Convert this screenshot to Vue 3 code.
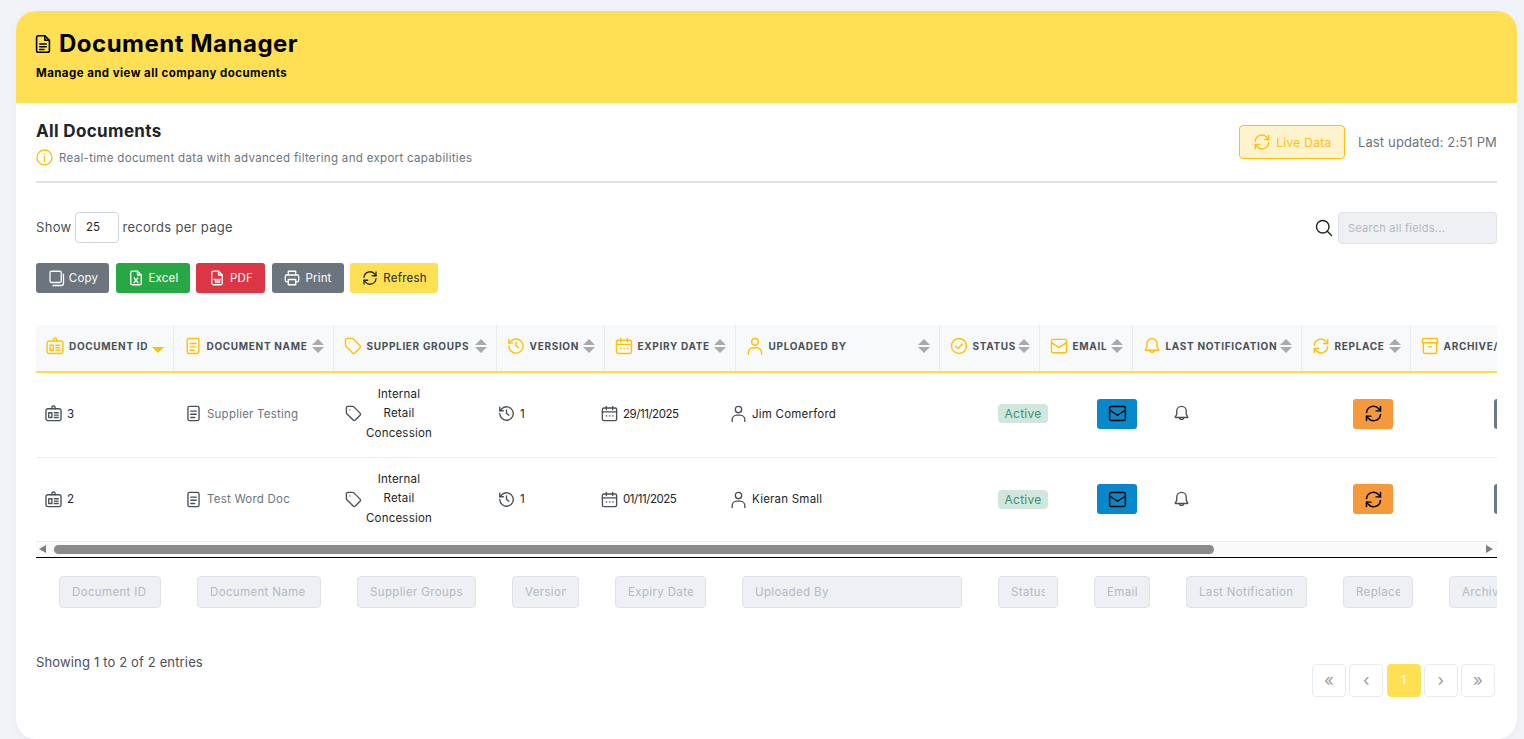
<script setup>
import { h } from "vue";

const icons = {
  doc: ["M7 3h7l5 5v11a2 2 0 0 1-2 2H7a2 2 0 0 1-2-2V5a2 2 0 0 1 2-2z", "M14 3v5h5", "M8.5 12h7", "M8.5 15h7", "M8.5 18h4.5"],
  badge: ["M5 6h14a2.5 2.5 0 0 1 2.5 2.5v10A2.5 2.5 0 0 1 19 21H5a2.5 2.5 0 0 1-2.5-2.5v-10A2.5 2.5 0 0 1 5 6z", "M10 6V4.5a2 2 0 0 1 4 0V6", "M6 11h4v6H6z", "M13 11h5", "M13 14h5", "M13 17h5"],
  tag: ["M5 3h6a2 2 0 0 1 1.4.6l7.9 7.9a2 2 0 0 1 0 2.8l-6 6a2 2 0 0 1-2.8 0l-7.9-7.9a2 2 0 0 1-.6-1.4V5a2 2 0 0 1 2-2z", "M7.5 7.5h.01"],
  history: ["M3.5 12a8.5 8.5 0 1 0 2.6-6.1L3.5 8.5", "M3.5 4v4.5H8", "M12 7.5V12l3 2"],
  calendar: ["M5 5h14a2 2 0 0 1 2 2v12a2 2 0 0 1-2 2H5a2 2 0 0 1-2-2V7a2 2 0 0 1 2-2z", "M3 10h18", "M8 3v4", "M16 3v4", "M8 15h.5", "M12 15h.5", "M16 15h.5"],
  user: ["M12 3a4 4 0 1 0 0 8 4 4 0 0 0 0-8z", "M4 22v-2a6 6 0 0 1 6-6h4a6 6 0 0 1 6 6v2"],
  check: ["M12 3a9 9 0 1 0 0 18 9 9 0 0 0 0-18z", "M8 12.5l3 2.5 5-5.5"],
  mail: ["M5 4h14a2 2 0 0 1 2 2v12a2 2 0 0 1-2 2H5a2 2 0 0 1-2-2V6a2 2 0 0 1 2-2z", "M3 8l9 6 9-6"],
  bell: ["M12 3a6 6 0 0 0-6 6v4l-2 3.5a.5.5 0 0 0 .5.5h15a.5.5 0 0 0 .5-.5L18 13V9a6 6 0 0 0-6-6z", "M9.5 17a2.5 2.5 0 0 0 5 0"],
  refresh: ["M4 11a8 8 0 0 1 14-4.5L20 9", "M20 4v5h-5", "M20 13a8 8 0 0 1-14 4.5L4 15", "M4 20v-5h5"],
  archive: ["M4.5 3h15A1.5 1.5 0 0 1 21 4.5V8H3V4.5A1.5 1.5 0 0 1 4.5 3z", "M4 8v11a2 2 0 0 0 2 2h12a2 2 0 0 0 2-2V8", "M10 13h4"],
  copy: ["M6 3h11a2 2 0 0 1 2 2v11a2 2 0 0 1-2 2H6a2 2 0 0 1-2-2V5a2 2 0 0 1 2-2z", "M22 7v12a3 3 0 0 1-3 3H8"],
  excel: ["M7 3h7l5 5v11a2 2 0 0 1-2 2H7a2 2 0 0 1-2-2V5a2 2 0 0 1 2-2z", "M14 3v5h5", "M9.5 12l5 6", "M14.5 12l-5 6"],
  pdf: ["M7 3h7l5 5v11a2 2 0 0 1-2 2H7a2 2 0 0 1-2-2V5a2 2 0 0 1 2-2z", "M14 3v5h5", "M8 14h2v4", "M12 14v4h1a2 2 0 0 0 0-4h-1z", "M17 14h-1.5v4"],
  print: ["M7 8V3h10v5", "M7 17H5a2 2 0 0 1-2-2v-5a2 2 0 0 1 2-2h14a2 2 0 0 1 2 2v5a2 2 0 0 1-2 2h-2", "M7 14h10v7H7z"],
  search: ["M10.5 3a7.5 7.5 0 1 0 0 15 7.5 7.5 0 0 0 0-15z", "M16 16l5 5"],
  info: ["M12 2.5a9.5 9.5 0 1 0 0 19 9.5 9.5 0 0 0 0-19z", "M12 11v6", "M12 7.5h.01"],
  file: ["M7 3h10a2 2 0 0 1 2 2v14a2 2 0 0 1-2 2H7a2 2 0 0 1-2-2V5a2 2 0 0 1 2-2z", "M8.5 9h7", "M8.5 13h7", "M8.5 17h5"]
};

const Icon = ({ name }) =>
  h("svg", { viewBox: "0 0 24 24", fill: "none", stroke: "currentColor", "stroke-width": 1.7, "stroke-linecap": "round", "stroke-linejoin": "round" },
    icons[name].map((d) => h("path", { d })));

const headers = [
  { label: "Document ID", icon: "badge", width: 137, active: true },
  { label: "Document Name", icon: "file", width: 160 },
  { label: "Supplier Groups", icon: "tag", width: 163 },
  { label: "Version", icon: "history", width: 108 },
  { label: "Expiry Date", icon: "calendar", width: 131 },
  { label: "Uploaded By", icon: "user", width: 204 },
  { label: "Status", icon: "check", width: 100 },
  { label: "Email", icon: "mail", width: 93 },
  { label: "Last Notification", icon: "bell", width: 169 },
  { label: "Replace", icon: "refresh", width: 109 },
  { label: "Archive/Restore", icon: "archive", width: 170 }
];

const bodyWidths = [137, 160, 153, 103, 129, 268, 99, 76, 180, 141, 150];

const rows = [
  { id: 3, name: "Supplier Testing", version: 1, expiry: "29/11/2025", by: "Jim Comerford" },
  { id: 2, name: "Test Word Doc", version: 1, expiry: "01/11/2025", by: "Kieran Small" }
];

const groups = ["Internal", "Retail", "Concession"];

const filters = [
  { label: "Document ID", width: 102 },
  { label: "Document Name", width: 124 },
  { label: "Supplier Groups", width: 119 },
  { label: "Version", width: 67 },
  { label: "Expiry Date", width: 91 },
  { label: "Uploaded By", width: 220 },
  { label: "Status", width: 60 },
  { label: "Email", width: 56 },
  { label: "Last Notification", width: 121 },
  { label: "Replace", width: 70 },
  { label: "Archive/Restore", width: 120 }
];

const tools = [
  { label: "Copy", icon: "copy", cls: "grey", width: 73 },
  { label: "Excel", icon: "excel", cls: "green", width: 74 },
  { label: "PDF", icon: "pdf", cls: "red", width: 69 },
  { label: "Print", icon: "print", cls: "grey", width: 72 },
  { label: "Refresh", icon: "refresh", cls: "yellow", width: 88 }
];
</script>

<template>
  <div class="page">
    <div class="card">
      <header class="banner">
        <h1><Icon name="doc" class="title-icon" />Document Manager</h1>
        <p>Manage and view all company documents</p>
      </header>

      <div class="content">
        <div class="top">
          <div>
            <h2>All Documents</h2>
            <div class="sub"><Icon name="info" class="info-icon" />Real-time document data with advanced filtering and export capabilities</div>
          </div>
          <div class="live">
            <button class="live-btn"><Icon name="refresh" class="live-icon" />Live Data</button>
            <span class="updated">Last updated: 2:51 PM</span>
          </div>
        </div>

        <div class="controls">
          <div class="length">
            Show <input class="length-input" value="25" /> records per page
          </div>
          <div class="search">
            <Icon name="search" class="search-icon" />
            <input class="field search-input" placeholder="Search all fields..." />
          </div>
        </div>

        <div class="tools">
          <button v-for="t in tools" :key="t.label" class="tool" :class="t.cls" :style="{ width: t.width + 'px' }">
            <Icon :name="t.icon" class="tool-icon" />{{ t.label }}
          </button>
        </div>

        <div class="table-wrap">
          <table class="head-table">
            <colgroup>
              <col v-for="c in headers" :key="c.label" :style="{ width: c.width + 'px' }" />
            </colgroup>
            <thead>
              <tr>
                <th v-for="c in headers" :key="c.label">
                  <div class="th-in">
                    <Icon :name="c.icon" class="th-icon" />
                    <span>{{ c.label }}</span>
                    <i class="sort" :class="{ active: c.active }"></i>
                  </div>
                </th>
              </tr>
            </thead>
          </table>

          <table class="body-table">
            <colgroup>
              <col v-for="(w, i) in bodyWidths" :key="i" :style="{ width: w + 'px' }" />
            </colgroup>
            <tbody>
              <tr v-for="r in rows" :key="r.id">
                <td class="first"><div class="cell"><Icon name="badge" class="cell-icon" />{{ r.id }}</div></td>
                <td><div class="cell muted"><Icon name="file" class="cell-icon" />{{ r.name }}</div></td>
                <td>
                  <div class="cell">
                    <Icon name="tag" class="cell-icon" />
                    <div class="groups"><div v-for="g in groups" :key="g">{{ g }}</div></div>
                  </div>
                </td>
                <td><div class="cell"><Icon name="history" class="cell-icon" />{{ r.version }}</div></td>
                <td><div class="cell"><Icon name="calendar" class="cell-icon" /><span class="date">{{ r.expiry }}</span></div></td>
                <td><div class="cell"><Icon name="user" class="cell-icon" />{{ r.by }}</div></td>
                <td><span class="badge">Active</span></td>
                <td><button class="act blue"><Icon name="mail" class="act-icon" /></button></td>
                <td><Icon name="bell" class="cell-icon" /></td>
                <td><button class="act orange"><Icon name="refresh" class="act-icon" /></button></td>
                <td><button class="act slate"><Icon name="archive" class="act-icon" /></button></td>
              </tr>
            </tbody>
          </table>

          <div class="scrollbar">
            <i class="arrow left"></i>
            <div class="thumb"></div>
            <i class="arrow right"></i>
          </div>
        </div>

        <div class="filters">
          <input v-for="f in filters" :key="f.label" class="field" :style="{ width: f.width + 'px' }" :placeholder="f.label" />
        </div>

        <div class="foot">
          <span class="showing">Showing 1 to 2 of 2 entries</span>
          <nav class="pager">
            <a>«</a>
            <a>‹</a>
            <a class="on">1</a>
            <a>›</a>
            <a>»</a>
          </nav>
        </div>
      </div>
    </div>
  </div>
</template>

<style>
html, body {
  margin: 0;
  background: #f1f3f9;
  overflow: hidden;
}
</style>

<style scoped>
* {
  box-sizing: border-box;
}

.page {
  height: 739px;
  padding: 11px 7px 0 16px;
  font-family: Inter, "Noto Sans", sans-serif;
  color: #212529;
}

.card {
  height: 728px;
  background: #fff;
  border-radius: 20px;
  overflow: hidden;
  box-shadow: 0 2px 8px rgba(0, 0, 0, 0.04);
}

.banner {
  height: 92px;
  background: #ffe055;
  padding: 18px 20px 0;
  color: #000;
}

.banner h1 {
  margin: 0;
  display: flex;
  align-items: center;
  font-size: 24px;
  line-height: 30px;
  font-weight: 700;
  letter-spacing: 0.5px;
}

.title-icon {
  width: 22px;
  height: 22px;
  margin: 0 5px 0 -4px;
}

.banner p {
  margin: 7px 0 0;
  font-size: 11.5px;
  line-height: 14px;
  font-weight: 700;
  letter-spacing: 0.44px;
}

.content {
  padding: 0 20px;
}

.top {
  height: 80px;
  border-bottom: 2px solid #dee2e6;
  display: flex;
  justify-content: space-between;
  padding-top: 18px;
}

h2 {
  margin: 0;
  font-size: 17px;
  line-height: 21px;
  font-weight: 700;
  letter-spacing: 0.35px;
  color: #212529;
}

.sub {
  display: flex;
  align-items: center;
  margin-top: 6px;
  font-size: 11.5px;
  line-height: 18px;
  color: #6c757d;
  letter-spacing: 0.32px;
}

.info-icon {
  width: 19px;
  height: 19px;
  margin: 0 5px 0 -1px;
  color: #ffc107;
}

.live {
  display: flex;
  align-items: flex-start;
  margin-top: 4px;
}

.live-btn {
  width: 106px;
  height: 34px;
  display: flex;
  align-items: center;
  justify-content: center;
  background: #fff3cd;
  border: 1px solid #ffc107;
  border-radius: 4px;
  color: #ffc107;
  font: inherit;
  font-size: 12px;
  letter-spacing: 0.3px;
}

.live-icon {
  width: 20px;
  height: 20px;
  margin-right: 4px;
}

.updated {
  margin-left: 13px;
  font-size: 13px;
  line-height: 34px;
  color: #6c757d;
  letter-spacing: 0.15px;
}

.controls {
  display: flex;
  justify-content: space-between;
  align-items: center;
  margin-top: 29px;
  height: 32px;
}

.length {
  display: flex;
  align-items: center;
  gap: 3.5px;
  margin-top: -2px;
  font-size: 13px;
  color: #495057;
  letter-spacing: 0.3px;
}

.length-input {
  width: 44px;
  height: 31px;
  border: 1px solid #ced4da;
  border-radius: 4px;
  padding: 0 10px;
  font: inherit;
  font-size: 11.5px;
  color: #212529;
  outline: none;
}

.search {
  display: flex;
  align-items: center;
}

.search-icon {
  width: 20px;
  height: 20px;
  margin-right: 4px;
  color: #212529;
}

.field {
  height: 32px;
  flex: none;
  background: #eef0f4;
  border: 1px solid #dfe2e8;
  border-radius: 4px;
  padding: 0 12px;
  font: inherit;
  font-size: 11.5px;
  letter-spacing: 0.35px;
  outline: none;
}

.field::placeholder {
  color: #b4b9c3;
  opacity: 1;
}

.search-input {
  width: 159px;
  padding: 0 9px;
  font-size: 11px;
  letter-spacing: 0.25px;
}

.tools {
  display: flex;
  gap: 6.5px;
  margin-top: 19px;
}

.tool {
  height: 30px;
  display: flex;
  align-items: center;
  justify-content: center;
  padding: 0;
  border: 0;
  border-radius: 3px;
  font: inherit;
  font-size: 11.5px;
  letter-spacing: 0.2px;
  color: #fff;
}

.tool-icon {
  width: 18px;
  height: 18px;
  margin-right: 4px;
}

.grey {
  background: #6c757d;
}

.green {
  background: #28a745;
}

.red {
  background: #dc3545;
}

.yellow {
  background: #ffe055;
  color: #212529;
}

.table-wrap {
  margin-top: 32px;
  overflow: hidden;
}

table {
  border-collapse: collapse;
  table-layout: fixed;
}

.head-table {
  width: 1544px;
}

.body-table {
  width: 1596px;
}

th {
  height: 47px;
  padding: 0;
  background: #f8f9fa;
  border-right: 1px solid #e9ecef;
  border-bottom: 2px solid #ffdd4a;
  text-align: left;
}

.th-in {
  display: flex;
  align-items: center;
  padding: 0 9px 4px 9px;
  font-size: 10px;
  font-weight: 700;
  text-transform: uppercase;
  letter-spacing: 0.68px;
  color: #495057;
  white-space: nowrap;
}

.th-icon {
  flex: none;
  width: 20px;
  height: 20px;
  margin-right: 4px;
  color: #ffc107;
}

.sort {
  flex: none;
  position: relative;
  width: 12px;
  height: 14px;
  margin-left: auto;
}

.sort::before,
.sort::after {
  content: "";
  position: absolute;
  left: 0;
  border-left: 6px solid transparent;
  border-right: 6px solid transparent;
}

.sort::before {
  top: 0;
  border-bottom: 6px solid #aaa;
}

.sort::after {
  bottom: 0;
  border-top: 6px solid #aaa;
}

.sort.active::before {
  border-bottom-color: transparent;
}

.sort.active::after {
  border-top-color: #ffc107;
}

td {
  height: 84px;
  padding: 0 12px 2px;
  border-bottom: 1px solid #e9ecef;
  font-size: 11.5px;
  letter-spacing: 0.22px;
  color: #212529;
  overflow: hidden;
  white-space: nowrap;
}

td.first {
  padding-left: 9px;
}

.body-table tr:last-child td {
  padding-bottom: 0;
}

.cell {
  display: flex;
  align-items: center;
}

.muted {
  color: #6c757d;
}

.date {
  letter-spacing: -0.45px;
}

.cell-icon {
  flex: none;
  width: 19px;
  height: 19px;
  margin: 0 4px 0 -1px;
  color: #495057;
  display: block;
}

.groups {
  width: 70px;
  margin-left: -3px;
  text-align: center;
  line-height: 19.5px;
}

.badge {
  display: inline-block;
  width: 50px;
  height: 19px;
  line-height: 19px;
  text-align: center;
  background: #d1e7dd;
  border-radius: 4px;
  color: #3f8f72;
  font-size: 12px;
}

.act {
  width: 40px;
  height: 30px;
  display: flex;
  align-items: center;
  justify-content: center;
  border: 0;
  border-radius: 3px;
  padding: 0;
  color: #000;
}

.act-icon {
  width: 21px;
  height: 21px;
}

.blue {
  background: #0788ca;
}

.orange {
  background: #f6993a;
}

.slate {
  background: #6b7a86;
}

.scrollbar {
  height: 16px;
  display: flex;
  align-items: center;
  background: #fafafa;
  border-bottom: 1px solid #000;
}

.thumb {
  width: 1160px;
  height: 9px;
  margin-left: 8px;
  background: #8b8b8b;
  border-radius: 5px;
}

.arrow {
  width: 0;
  height: 0;
  border-top: 4.5px solid transparent;
  border-bottom: 4.5px solid transparent;
}

.arrow.left {
  margin-left: 3px;
  border-right: 7px solid #808080;
}

.arrow.right {
  margin-left: auto;
  margin-right: 4px;
  border-left: 7px solid #808080;
}

.filters {
  display: flex;
  gap: 36px;
  margin-top: 18px;
  padding-left: 23px;
  overflow: hidden;
}

.foot {
  display: flex;
  justify-content: space-between;
  align-items: flex-start;
  margin-top: 46px;
}

.showing {
  font-size: 13px;
  line-height: 17px;
  color: #495057;
  letter-spacing: 0.15px;
}

.pager {
  display: flex;
  gap: 3.25px;
  margin-top: 10px;
  margin-right: 2px;
}

.pager a {
  width: 34px;
  height: 33px;
  display: flex;
  align-items: center;
  justify-content: center;
  border: 1px solid #e9ecef;
  border-radius: 4px;
  color: #9a9ea3;
  font-size: 17px;
}

.pager a.on {
  background: #ffe055;
  border-color: #ffe055;
  color: #fff;
  font-size: 11.5px;
}
</style>
